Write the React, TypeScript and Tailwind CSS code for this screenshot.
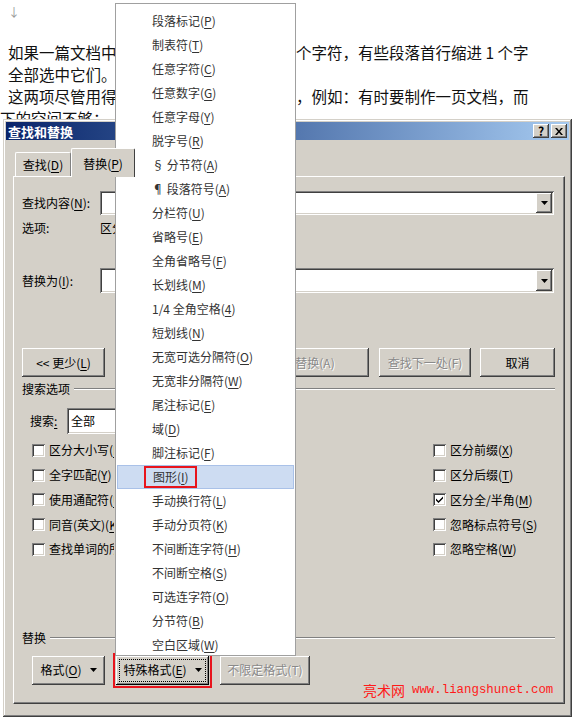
import React from "react";

const raised =
  "bg-[#d4d0c8] shadow-[inset_-1px_-1px_#404040,inset_1px_1px_#ffffff,inset_-2px_-2px_#808080,inset_2px_2px_#d4d0c8]";
const sunken =
  "bg-white shadow-[inset_1px_1px_#808080,inset_-1px_-1px_#ffffff,inset_2px_2px_#404040,inset_-2px_-2px_#d4d0c8]";
const disabledText = "text-[#8a8a8a] [text-shadow:1px_1px_0_#ffffff]";

// "名称(&K)" -> 名称(K) with K underlined
const Label = ({ t }: { t: string }) => {
  const i = t.indexOf("&");
  if (i < 0) return <>{t}</>;
  return (
    <>
      {t.slice(0, i)}
      <u className="underline-offset-2">{t[i + 1]}</u>
      {t.slice(i + 2)}
    </>
  );
};

const Arrow = () => (
  <svg width="7" height="4" viewBox="0 0 7 4" className="shrink-0">
    <path d="M0 0h7L3.5 4z" fill="#000" />
  </svg>
);

const Combo = ({ w, text }: { w: string; text?: string }) => (
  <div className={`${sunken} ${w} h-full flex items-center p-[2px]`}>
    <span className="flex-1 pl-1">{text}</span>
    <div className={`${raised} w-[16px] h-full flex items-center justify-center`}>
      <Arrow />
    </div>
  </div>
);

const Button = ({
  t,
  w,
  disabled,
  children,
}: {
  t?: string;
  w: string;
  disabled?: boolean;
  children?: React.ReactNode;
}) => (
  <div className={`${raised} ${w} h-[29px] flex items-center justify-center gap-2 ${disabled ? disabledText : ""}`}>
    {t && (
      <span>
        <Label t={t} />
      </span>
    )}
    {children}
  </div>
);

const Check = ({ t, checked }: { t: string; checked?: boolean }) => (
  <div className="h-[24.75px] flex items-center gap-[4px] whitespace-nowrap">
    <div className={`${sunken} w-[13px] h-[13px] shrink-0 flex items-center justify-center`}>
      {checked && (
        <svg width="7" height="7" viewBox="0 0 7 7">
          <path d="M0 2.5l2.5 2.5L7 0.5v2L2.5 7 0 4.5z" fill="#000" />
        </svg>
      )}
    </div>
    <span>
      <Label t={t} />
    </span>
  </div>
);

const Group = ({ t }: { t: string }) => (
  <div className="h-[16px] flex items-center gap-1">
    <span>{t}</span>
    <div className="flex-1 border-t border-t-[#808080] border-b border-b-white" />
  </div>
);

const menuItems = [
  "段落标记(&P)",
  "制表符(&T)",
  "任意字符(&C)",
  "任意数字(&G)",
  "任意字母(&Y)",
  "脱字号(&R)",
  "§ 分节符(&A)",
  "¶ 段落符号(&A)",
  "分栏符(&U)",
  "省略号(&E)",
  "全角省略号(&F)",
  "长划线(&M)",
  "1/4 全角空格(&4)",
  "短划线(&N)",
  "无宽可选分隔符(&O)",
  "无宽非分隔符(&W)",
  "尾注标记(&E)",
  "域(&D)",
  "脚注标记(&F)",
  "图形(&I)",
  "手动换行符(&L)",
  "手动分页符(&K)",
  "不间断连字符(&H)",
  "不间断空格(&S)",
  "可选连字符(&O)",
  "分节符(&B)",
  "空白区域(&W)",
];

const leftChecks = ["区分大小写(&H)", "全字匹配(&Y)", "使用通配符(&U)", "同音(英文)(&K)", "查找单词的所有形式(英文)(&W)"];
const rightChecks = ["区分前缀(&X)", "区分后缀(&T)", "区分全/半角(&M)", "忽略标点符号(&S)", "忽略空格(&W)"];

export default function App() {
  return (
    <div className="relative w-[576px] h-[720px] overflow-hidden bg-white text-black font-['Noto_Sans_CJK_SC',sans-serif]">
      {/* document behind the dialog; the middle of each line is under the menu */}
      <div className="pt-[1px] pl-[8px] text-[15.5px] leading-[22px] whitespace-nowrap text-[#111]">
        <div className="text-[12px] text-[#999]">↓</div>
        <div className="mt-[18px] flex">
          <span className="w-[288px] overflow-hidden">如果一篇文档中</span>
          <span>个字符，有些段落首行缩进 1 个字</span>
        </div>
        <div>全部选中它们。</div>
        <div className="flex">
          <span className="w-[288px] overflow-hidden">这两项尽管用得</span>
          <span>，例如：有时要制作一页文档，而</span>
        </div>
        <div className="-ml-[8px]">下的空间不够：</div>
      </div>

      {/* dialog window */}
      <div className="absolute left-[3px] top-[119px] w-[569px] h-[598px] bg-[#d4d0c8] p-[3px] text-[12px] shadow-[inset_-1px_-1px_#404040,inset_1px_1px_#d4d0c8,inset_-2px_-2px_#808080,inset_2px_2px_#ffffff]">
        <div className="h-[18px] flex items-center justify-between pl-[2px] pr-[2px] bg-gradient-to-r from-[#0a246a] to-[#a6caf0]">
          <span className="text-white font-bold text-[13px] leading-none">查找和替换</span>
          <div className="flex gap-[2px]">
            <div className={`${raised} w-[16px] h-[14px] flex items-center justify-center text-[12px] font-bold leading-none`}>?</div>
            <div className={`${raised} w-[16px] h-[14px] flex items-center justify-center`}>
              <svg width="8" height="7" viewBox="0 0 8 7">
                <path d="M0 0h2l2 2.5L6 0h2L5 3.5 8 7H6L4 4.5 2 7H0l3-3.5z" fill="#000" />
              </svg>
            </div>
          </div>
        </div>

        <div className="pt-[8px] pl-[7px]">
          {/* tabs */}
          <div className="flex items-end h-[28px]">
            <div className="ml-[2px] w-[56px] h-[24px] flex items-center justify-center border-t border-l border-white border-r border-r-[#808080] rounded-t-[2px]">
              <Label t="查找(&D)" />
            </div>
            <div className="relative z-10 w-[64px] h-[29px] -mb-px flex items-start pt-[6px] justify-center bg-[#d4d0c8] border-t border-l border-white border-r border-r-[#404040] rounded-t-[2px]">
              <Label t="替换(&P)" />
            </div>
          </div>

          {/* tab panel */}
          <div className="w-[552px] h-[528px] border-t border-l border-white border-r border-b border-r-[#404040] border-b-[#404040] shadow-[inset_-1px_-1px_#808080]">
            <div className="pt-[14px] pl-[8px] pr-[9px]">
              <div className="flex h-[24px] items-center">
                <span className="w-[78px]">
                  <Label t="查找内容(&N):" />
                </span>
                <Combo w="w-[454px]" />
              </div>
              <div className="mt-[4px] h-[18px] flex items-center">
                <span className="w-[78px]">选项:</span>
                <span className="w-[15px] overflow-hidden whitespace-nowrap">区分</span>
              </div>
              <div className="mt-[31px] flex h-[25px] items-center">
                <span className="w-[78px]">
                  <Label t="替换为(&I):" />
                </span>
                <Combo w="w-[454px]" />
              </div>

              <div className="mt-[55px] flex items-center">
                <Button t="<< 更少(&L)" w="w-[83px]" />
                <div className="ml-[10px]">
                  <Button w="w-[120px]" disabled />
                </div>
                <div className="ml-[2px]">
                  <Button t="全部替换(A)" w="w-[132px]" disabled />
                </div>
                <div className="ml-[10px]">
                  <Button t="查找下一处(F)" w="w-[92px]" disabled />
                </div>
                <div className="ml-[9px]">
                  <Button t="取消" w="w-[75px]" />
                </div>
              </div>

              <div className="mt-[4px]">
                <Group t="搜索选项" />
              </div>

              <div className="mt-[11px] h-[26px] pl-[8px] flex items-center">
                <span className="w-[37px]">
                  <Label t="搜索&:" />
                </span>
                <div className={`${sunken} w-[150px] h-full flex items-center pl-[4px]`}>全部</div>
              </div>

              <div className="mt-[4px] flex">
                <div className="ml-[10px] w-[401px]">
                  <div className="w-[82px] overflow-hidden">
                    {leftChecks.map((c) => (
                      <Check key={c} t={c} />
                    ))}
                  </div>
                </div>
                <div>
                  {rightChecks.map((c) => (
                    <Check key={c} t={c} checked={c.startsWith("区分全")} />
                  ))}
                </div>
              </div>

              <div className="mt-[68px]">
                <Group t="替换" />
              </div>

              <div className="mt-[7px] h-[35px] flex items-center gap-[8px] pl-[10px]">
                <Button t="格式(&O)" w="w-[73px]">
                  <Arrow />
                </Button>
                <div className="border-2 border-[#e8141c] px-px py-[1px]">
                  <div className="w-[93px] h-[29px] p-[3px] bg-[#d4d0c8] shadow-[inset_-1px_-1px_#000000,inset_1px_1px_#ffffff,inset_-2px_-2px_#808080,inset_2px_2px_#d4d0c8]">
                    <div className="h-full border border-dotted border-black flex items-center justify-center gap-2">
                      <span>
                        <Label t="特殊格式(&E)" />
                      </span>
                      <Arrow />
                    </div>
                  </div>
                </div>
                <Button t="不限定格式(T)" w="w-[90px]" disabled />
              </div>
            </div>
          </div>
        </div>

        {/* watermark */}
        <div className="absolute left-[360px] top-[562px] flex items-center gap-[7px] text-[#ff1a1a] leading-[18px] whitespace-nowrap">
          <span className="text-[14px] font-['Noto_Sans_CJK_SC',serif]">亮术网</span>
          <span className="text-[12.4px] font-['Liberation_Mono',monospace]">www.liangshunet.com</span>
        </div>
      </div>

      {/* special format dropdown menu */}
      <div className="absolute left-[115px] top-[3px] w-[181px] h-[653px] bg-white border border-[#a0a0a0] pt-[5px] text-[12px] text-[#333]">
        {menuItems.map((m, i) =>
          i === 19 ? (
            <div key={i} className="mx-px h-[24px] flex items-center bg-[#cddcf2] border border-[#a9c1e8] pl-[26px]">
              <span className="h-[22px] border-2 border-[#e8141c] pl-[7px] pr-[6px] flex items-center">
                <Label t={m} />
              </span>
            </div>
          ) : (
            <div key={i} className="h-[24px] flex items-center pl-[36px] whitespace-nowrap">
              <Label t={m} />
            </div>
          )
        )}
      </div>
    </div>
  );
}
